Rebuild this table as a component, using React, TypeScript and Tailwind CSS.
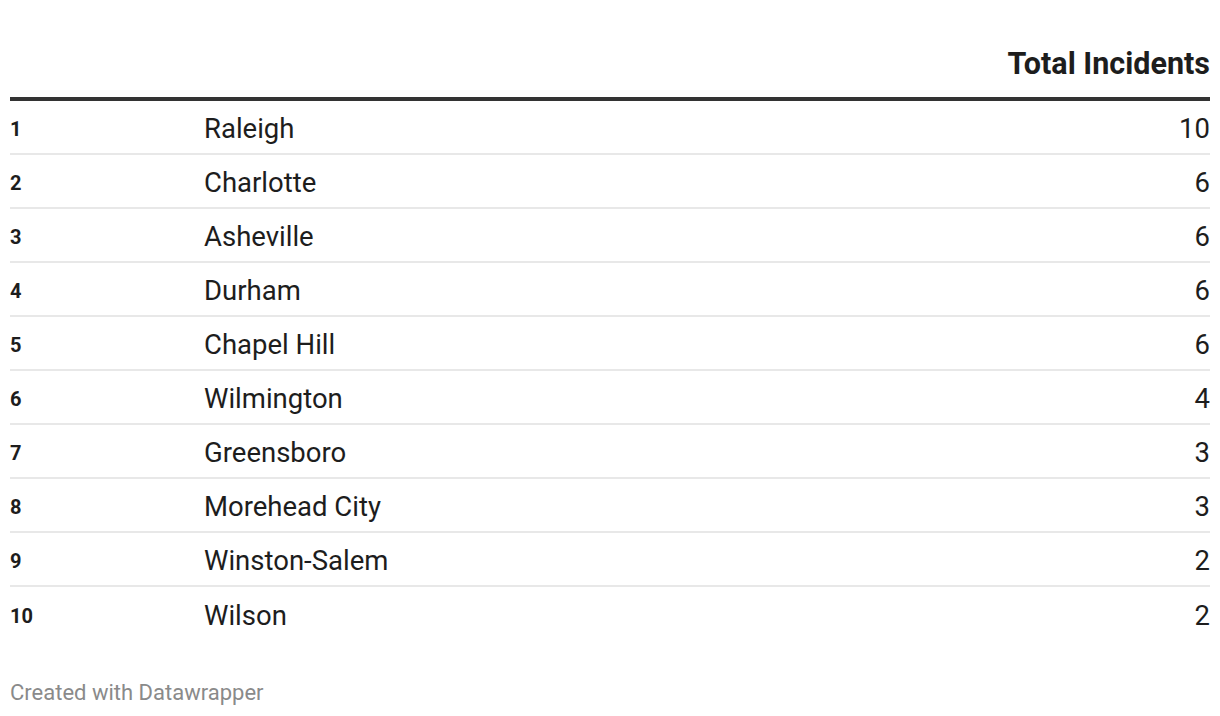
import React from 'react';

interface Row {
  rank: number;
  city: string;
  total: number;
}

const rows: Row[] = [
  { rank: 1, city: 'Raleigh', total: 10 },
  { rank: 2, city: 'Charlotte', total: 6 },
  { rank: 3, city: 'Asheville', total: 6 },
  { rank: 4, city: 'Durham', total: 6 },
  { rank: 5, city: 'Chapel Hill', total: 6 },
  { rank: 6, city: 'Wilmington', total: 4 },
  { rank: 7, city: 'Greensboro', total: 3 },
  { rank: 8, city: 'Morehead City', total: 3 },
  { rank: 9, city: 'Winston-Salem', total: 2 },
  { rank: 10, city: 'Wilson', total: 2 },
];

const App: React.FC = () => {
  return (
    <div className="w-[1220px] h-[716px] bg-white px-[10px] font-['Roboto',sans-serif] text-[#1d1d1d]">
      {/* Header */}
      <div className="flex justify-end items-end h-[97px] pb-[15px]">
        <span className="text-[30.5px] leading-[36px] font-bold">Total Incidents</span>
      </div>
      <div className="h-[4px] bg-[#333333]" />

      {/* Rows */}
      <div>
        {rows.map((row, i) => (
          <div
            key={row.rank}
            className={`flex items-center h-[54px] pt-[3px] ${i < rows.length - 1 ? 'border-b-2 border-[#e8e8e8]' : ''}`}
          >
            <div className="w-[194px] text-[20px] font-bold">{row.rank}</div>
            <div className="flex-1 text-[27.5px] leading-[32px]">{row.city}</div>
            <div className="text-[27.5px] leading-[32px] text-right">{row.total}</div>
          </div>
        ))}
      </div>

      {/* Footer */}
      <div className="mt-[35px] text-[22px] leading-[33px] text-[#8a8a8a]">Created with Datawrapper</div>
    </div>
  );
};

export default App;
